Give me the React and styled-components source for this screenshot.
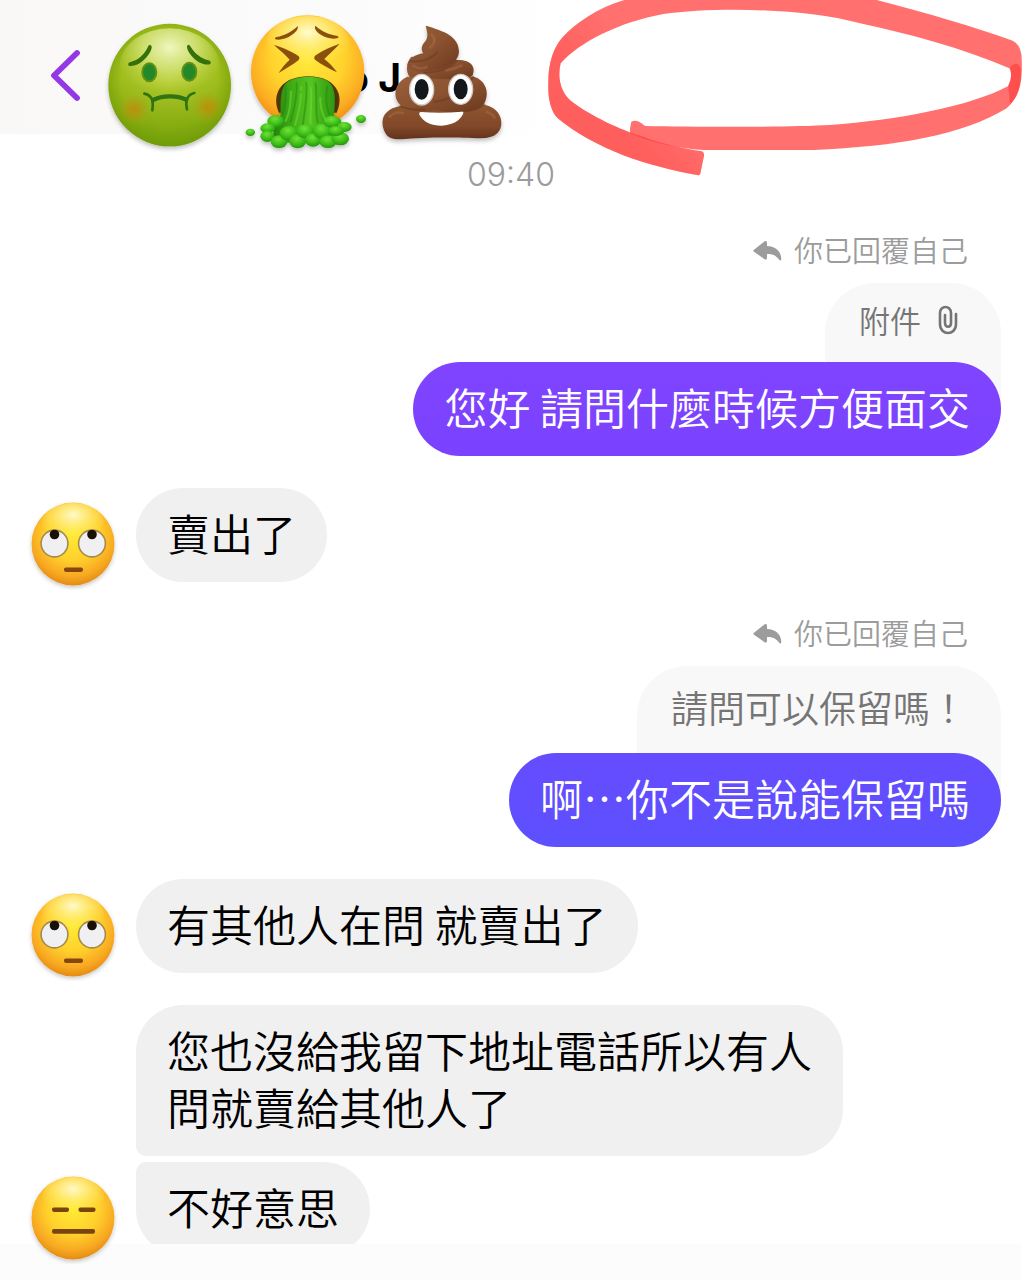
import React from 'react';
import styled, { createGlobalStyle, css } from 'styled-components';

const GlobalStyle = createGlobalStyle`
    * {
        box-sizing: border-box;
    }
    body {
        margin: 0;
        background-color: #fff;
        font-family: 'Noto Sans CJK TC', 'Noto Sans', sans-serif;
        font-weight: 350;
    }
`;

const Page = styled.div`
    position: relative;
    display: flex;
    flex-direction: column;
    min-height: 100vh;
    overflow: hidden;
`;

const Header = styled.header`
    position: relative;
    z-index: 1;
    display: flex;
    align-items: flex-start;
    height: 134px;
    padding-left: 40px;
    background: linear-gradient(to right, #faf8f7, #fafafa 24%, #fefefe 50%, #fff 55%);
`;

const BackButton = styled.button`
    width: 52px;
    height: 152px;
    margin-right: 12px;
    padding: 0;
    border: 0;
    background: none;
    cursor: pointer;
`;

const Name = styled.h1`
    position: absolute;
    left: 345px;
    top: 54px;
    margin: 0;
    font: 700 39px/48px Inter, sans-serif;
    color: #000;
`;

const Stickers = styled.div`
    position: relative;
    display: flex;
    gap: 4px;
`;

const Scribble = styled.svg`
    position: absolute;
    top: 0;
    right: 0;
    z-index: 2;
    pointer-events: none;
`;

const Chat = styled.main`
    display: flex;
    flex-direction: column;
    flex: 1;
    padding-top: 21px;
`;

const Time = styled.time`
    align-self: center;
    margin-bottom: 36px;
    font: 300 32px/40px Inter, sans-serif;
    color: #9b9b9b;
`;

const Thread = styled.div`
    display: flex;
    flex-direction: column;
    gap: 32px;
`;

const Sent = styled.div`
    display: flex;
    flex-direction: column;
    align-items: flex-end;
    padding: 0 21px;
`;

const ReplyLabel = styled.div`
    display: flex;
    align-items: center;
    gap: 12px;
    margin-bottom: 12px;
    padding-right: 33px;
    font-size: 29px;
    line-height: 36px;
    color: #9c9c9c;

    span {
        padding-bottom: 4px;
    }
`;

/* runs on underneath the bubble that answers it */
const Quote = styled.div`
    display: flex;
    align-items: center;
    gap: 16px;
    margin-bottom: -47px;
    padding: 16px 34px 68px;
    border-radius: 50px 50px 0 0;
    background-color: #f8f8f8;
    font-size: ${p => (p.$small ? '31px' : '37px')};
    line-height: ${p => (p.$small ? '42px' : '50px')};
    color: #757575;
`;

const Bubble = styled.p`
    margin: 0;
    padding: 16px 31px 21px;
    border-radius: 47px;
    font-size: 43px;
    line-height: 57px;
`;

const SentBubble = styled(Bubble)`
    position: relative;
    color: #fff;
    background: ${p => (p.$tone === 'violet'
        ? 'linear-gradient(#8044ff, #7a42ff)'
        : 'linear-gradient(#664cff, #5c50ff)')};
`;

const Received = styled.div`
    display: flex;
    align-items: flex-end;
    gap: 17px;
    padding: 0 21px 0 27px;
`;

const Stack = styled.div`
    display: flex;
    flex-direction: column;
    align-items: flex-start;
    gap: 6px;
`;

const ReceivedBubble = styled(Bubble)`
    max-width: 707px;
    color: #000;
    background-color: #f0f0f0;
    ${p => p.$join === 'below' && css`border-bottom-left-radius: 10px;`}
    ${p => p.$join === 'above' && css`border-top-left-radius: 10px;`}
`;

const Avatar = styled.svg`
    position: relative;
    z-index: 2;
    flex: none;
    margin-bottom: -8px;
`;

const Composer = styled.footer`
    position: relative;
    z-index: 1;
    height: 36px;
    margin-top: -12px;
    background-color: #fcfcfc;
`;

const NauseatedSticker = () => (
    <svg width="132" height="160" viewBox="312 0 396 480" role="img" aria-label="nauseated face">
        <defs>
            <radialGradient id="green" cx=".5" cy=".45" r=".56">
                <stop offset="0" stopColor="#b4cc30" />
                <stop offset=".7" stopColor="#9fbd1d" />
                <stop offset=".9" stopColor="#83a90d" />
                <stop offset="1" stopColor="#6d9508" />
            </radialGradient>
            <radialGradient id="greenShine" cx=".5" cy=".25" r=".6">
                <stop offset="0" stopColor="#f1f7c0" />
                <stop offset=".45" stopColor="#dbe888" stopOpacity=".75" />
                <stop offset="1" stopColor="#c5d94d" stopOpacity="0" />
            </radialGradient>
            <linearGradient id="greenShade" x1="0" y1="0" x2="0" y2="1">
                <stop offset=".45" stopColor="#7ba30a" stopOpacity="0" />
                <stop offset="1" stopColor="#6f9d08" stopOpacity=".8" />
            </linearGradient>
            <radialGradient id="cheek">
                <stop offset="0" stopColor="#c98505" stopOpacity=".8" />
                <stop offset="1" stopColor="#b99a10" stopOpacity="0" />
            </radialGradient>
            <filter id="stickerShadow" x="-10%" y="-10%" width="120%" height="125%">
                <feDropShadow dx="0" dy="8" stdDeviation="7" floodOpacity=".25" />
            </filter>
        </defs>
        <circle cx="509" cy="255" r="184" fill="url(#green)" filter="url(#stickerShadow)" />
        <circle cx="509" cy="255" r="184" fill="url(#greenShade)" />
        <ellipse cx="509" cy="200" rx="150" ry="115" fill="url(#greenShine)" />
        <circle cx="402" cy="328" r="48" fill="url(#cheek)" />
        <circle cx="624" cy="322" r="48" fill="url(#cheek)" />
        <g fill="#35700a">
            <path d="M450 134 C460 138 454 152 444 166 C428 188 406 200 388 198 C382 194 385 187 392 186 C415 180 432 164 442 144 Q446 134 450 134Z" />
            <path d="M564 134 C557 140 564 154 575 168 C592 188 612 196 630 193 C635 188 632 183 625 181 C602 174 584 160 574 143 Q569 133 564 134Z" />
        </g>
        <g fill="#23882a" stroke="#5f9012" strokeWidth="6">
            <ellipse cx="448" cy="217" rx="21" ry="27" />
            <ellipse cx="568" cy="215" rx="21" ry="27" />
        </g>
        <g fill="none" stroke="#2f7313" strokeLinecap="round">
            <path d="M433 281 C446 283 453 290 458 302 M560 300 C564 288 572 281 583 279" strokeWidth="8" />
            <path d="M459 300 C488 286 530 286 559 299" strokeWidth="13" />
            <path d="M457 300 Q460 315 457 331 M560 298 Q557 313 561 328" strokeWidth="8" />
        </g>
    </svg>
);

const VomitingSticker = () => (
    <svg width="132" height="160" viewBox="30 0 396 480" role="img" aria-label="vomiting face">
        <defs>
            <radialGradient id="yellow" cx=".5" cy=".38" r=".64">
                <stop offset="0" stopColor="#ffea3c" />
                <stop offset=".5" stopColor="#ffd32c" />
                <stop offset=".8" stopColor="#fcac22" />
                <stop offset="1" stopColor="#ec8810" />
            </radialGradient>
            <radialGradient id="yellowShine" cx=".5" cy=".3" r=".6">
                <stop offset="0" stopColor="#fffbd0" />
                <stop offset="1" stopColor="#ffee60" stopOpacity="0" />
            </radialGradient>
            <linearGradient id="stream">
                <stop offset="0" stopColor="#23820c" />
                <stop offset=".3" stopColor="#43ae18" />
                <stop offset=".55" stopColor="#55c522" />
                <stop offset="1" stopColor="#278e0c" />
            </linearGradient>
            <radialGradient id="blob" cx=".45" cy=".3" r=".7">
                <stop offset="0" stopColor="#6fe238" />
                <stop offset=".6" stopColor="#3ebd18" />
                <stop offset="1" stopColor="#23950c" />
            </radialGradient>
        </defs>
        <circle cx="233" cy="216" r="170" fill="url(#yellow)" filter="url(#stickerShadow)" />
        <ellipse cx="233" cy="130" rx="125" ry="82" fill="url(#yellowShine)" />
        <g fill="#8b510c">
            <path d="M203 78 C206 88 196 98 184 106 C168 117 150 121 136 118 Q132 113 140 111 C163 107 185 96 203 78Z" />
            <path d="M256 77 C251 87 262 98 275 106 C292 116 310 118 324 114 Q328 109 320 107 C298 104 275 94 256 77Z" />
            <path d="M132 135 C160 143 187 155 206 169 Q211 174 206 180 C188 194 168 206 146 219 C154 205 165 192 179 179 C166 164 148 150 132 135Z" />
            <path d="M329 131 C303 140 275 152 255 167 Q250 173 255 179 C274 193 296 205 321 217 C311 202 298 189 283 177 C296 162 315 148 329 131Z" />
        </g>
        <path d="M147 338 C128 298 142 254 184 238 C218 225 260 226 290 240 C329 260 338 300 320 338Z" fill="#55380a" />
        <g filter="url(#stickerShadow)">
            <path d="M152 345 C152 300 148 252 184 239 C218 227 256 227 287 240 C320 256 316 300 312 345 L330 385 L320 430 L130 428 L130 380Z" fill="url(#stream)" />
            <g fill="url(#blob)">
                <ellipse cx="137" cy="364" rx="25" ry="19" />
                <ellipse cx="113" cy="385" rx="22" ry="15" />
                <ellipse cx="112" cy="409" rx="21" ry="17" />
                <ellipse cx="147" cy="425" rx="25" ry="19" />
                <ellipse cx="176" cy="400" rx="27" ry="22" />
                <ellipse cx="203" cy="424" rx="25" ry="21" />
                <ellipse cx="226" cy="394" rx="27" ry="21" />
                <ellipse cx="249" cy="420" rx="24" ry="20" />
                <ellipse cx="276" cy="394" rx="27" ry="23" />
                <ellipse cx="294" cy="425" rx="26" ry="19" />
                <ellipse cx="331" cy="416" rx="26" ry="20" />
                <ellipse cx="307" cy="365" rx="27" ry="18" />
                <ellipse cx="343" cy="381" rx="22" ry="15" />
                <ellipse cx="318" cy="393" rx="24" ry="15" />
                <ellipse cx="61" cy="397" rx="14" ry="11" />
                <ellipse cx="393" cy="357" rx="15" ry="12" />
            </g>
        </g>
        <g fill="none" stroke="#6bd833" strokeWidth="6" strokeLinecap="round" opacity=".6">
            <path d="M183 275 C181 315 180 335 167 363" />
            <path d="M214 261 v8 M213 283 C212 320 203 346 195 375" />
            <path d="M242 263 C247 300 240 335 242 370" />
            <path d="M271 294 C270 325 278 345 289 363" />
        </g>
        <g fill="none" stroke="#218a0c" strokeWidth="6" strokeLinecap="round" opacity=".5">
            <path d="M166 258 C168 290 168 320 158 342 M200 250 C203 300 191 325 182 366" />
            <path d="M229 248 C233 300 222 340 219 372 M257 250 C262 300 255 330 263 368 M291 260 C287 290 290 325 298 344" />
        </g>
    </svg>
);

const PoopSticker = () => (
    <svg width="132" height="160" viewBox="438 0 396 480" role="img" aria-label="pile of poo">
        <defs>
            <linearGradient id="brown" x1="0" y1="0" x2="1" y2="1">
                <stop offset="0" stopColor="#9a603b" />
                <stop offset=".5" stopColor="#8a5230" />
                <stop offset="1" stopColor="#6a381e" />
            </linearGradient>
            <linearGradient id="brownBase" x1="0" y1="0" x2="0" y2="1">
                <stop offset="0" stopColor="#8d5530" />
                <stop offset=".6" stopColor="#82492a" />
                <stop offset="1" stopColor="#63321c" />
            </linearGradient>
        </defs>
        <g filter="url(#stickerShadow)">
            <path d="M510 318 C465 328 452 352 460 385 C468 412 482 419 515 418 C590 410 690 412 750 415 C795 416 816 395 814 366 C812 337 790 320 765 315Z" fill="url(#brownBase)" />
            <path d="M532 230 C500 244 490 275 500 300 C520 342 570 336 620 330 C680 345 745 335 764 308 C780 275 765 240 732 230Z" fill="url(#brown)" />
            <path d="M544 170 C528 190 527 215 540 232 C600 236 700 245 727 228 C739 202 725 180 684 180Z" fill="url(#brown)" />
            <path d="M588 77 C584 78 600 104 587 122 C572 138 573 150 580 160 C556 164 534 176 532 196 C540 216 583 218 617 211 C662 202 686 180 687 155 C686 108 643 94 588 77Z" fill="url(#brown)" />
        </g>
        <g fill="none" stroke="#6d3b20" strokeWidth="6" strokeLinecap="round" opacity=".6">
            <path d="M541 184 C568 187 602 181 622 156" />
            <path d="M583 218 C625 218 660 204 681 182" />
            <path d="M613 305 C662 299 710 273 729 231" />
            <path d="M511 319 C540 331 563 331 583 328 M707 334 C735 331 754 322 763 313" />
        </g>
        <g fill="none" stroke="#b67a52" strokeWidth="8" strokeLinecap="round" opacity=".35">
            <path d="M605 104 C619 118 614 132 600 143" />
            <path d="M551 198 C562 206 578 206 590 201 M649 211 C668 209 681 204 694 197" />
            <path d="M480 350 C488 340 502 335 519 339 M770 336 C782 339 789 345 794 353" />
        </g>
        <g fill="#fff" stroke="#d5c8c2" strokeWidth="4">
            <ellipse cx="575" cy="269" rx="36" ry="46" />
            <ellipse cx="692" cy="268" rx="36" ry="45" />
        </g>
        <g fill="#15181b">
            <ellipse cx="575" cy="268" rx="21" ry="31" />
            <ellipse cx="692" cy="267" rx="21" ry="31" />
        </g>
        <path d="M572 336 Q566 337 568 344 C580 366 604 377 635 377 C666 376 691 363 700 340 Q701 334 695 335 C655 339 612 339 572 336Z" fill="#fff" />
    </svg>
);

const FaceAvatar = ({ mood }) => (
    <Avatar width="92" height="92" viewBox="0 0 92 92" role="img" aria-label={mood}>
        <defs>
            <radialGradient id="face" cx=".5" cy=".38" r=".64">
                <stop offset="0" stopColor="#ffec34" />
                <stop offset=".5" stopColor="#ffd02c" />
                <stop offset=".8" stopColor="#f8a822" />
                <stop offset="1" stopColor="#e08611" />
            </radialGradient>
            <radialGradient id="faceShine" cx=".5" cy=".3" r=".6">
                <stop offset="0" stopColor="#fff9cd" />
                <stop offset="1" stopColor="#ffee60" stopOpacity="0" />
            </radialGradient>
            <filter id="faceShadow" x="-10%" y="-10%" width="120%" height="125%">
                <feDropShadow dx="0" dy="2" stdDeviation="2" floodOpacity=".22" />
            </filter>
        </defs>
        <circle cx="46" cy="46" r="41.5" fill="url(#face)" filter="url(#faceShadow)" />
        <ellipse cx="46" cy="25" rx="31" ry="20" fill="url(#faceShine)" />
        {mood === 'rolling eyes' ? (
            <g>
                <g fill="#f0f0f3" stroke="#a58b4b" strokeWidth="1.6">
                    <circle cx="27.5" cy="45.5" r="13.4" />
                    <circle cx="65" cy="45.5" r="13.4" />
                </g>
                <circle cx="27.5" cy="36.5" r="4.8" fill="#1a1008" />
                <circle cx="65" cy="36.5" r="4.8" fill="#1a1008" />
                <rect x="37" y="69.5" width="19" height="4.4" rx="1.8" fill="#854710" />
            </g>
        ) : (
            <g fill="#784510">
                <rect x="25" y="35.5" width="17" height="4.4" rx="1.8" />
                <rect x="51.5" y="35.5" width="17" height="4.4" rx="1.8" />
                <rect x="25" y="57" width="43" height="4.8" rx="2" />
            </g>
        )}
    </Avatar>
);

const ReplyIcon = () => (
    <svg width="29" height="22" viewBox="0 0 87 66" fill="#9c9c9c" aria-hidden="true">
        <path d="M3 29 L35 4 Q42 0 42 8 V18 C67 19 83 32 85 56 Q85 64 79 60 C70 47 60 42 42 42 V54 Q41 62 35 58 L3 35 Q-1 32 3 29Z" />
    </svg>
);

const ClipIcon = () => (
    <svg width="30" height="32" viewBox="0 0 30 32" fill="none" stroke="#757575" strokeWidth="2.6" strokeLinecap="round" aria-hidden="true">
        <path d="M19 10 V20 C19 32 3 32 3 20 V9 C3 1 14 1 14 9 V19 C14 24 8 24 8 19 V11" />
    </svg>
);

const Reply = ({ quote, attachment, tone, children }) => (
    <Sent>
        <ReplyLabel>
            <ReplyIcon />
            <span>你已回覆自己</span>
        </ReplyLabel>
        <Quote $small={attachment}>
            <span>{quote}</span>
            {attachment && <ClipIcon />}
        </Quote>
        <SentBubble $tone={tone}>{children}</SentBubble>
    </Sent>
);

const App = () => {
    return (
        <Page lang="zh-TW">
            <GlobalStyle />
            <Header>
                <BackButton aria-label="返回">
                    <svg width="52" height="60" viewBox="0 0 52 60" fill="none" stroke="#9438e6" strokeWidth="5.8" strokeLinecap="round" strokeLinejoin="round">
                        <path d="M37 8 L14 30.5 L37 53" />
                    </svg>
                </BackButton>
                <Name>o J</Name>
                <Stickers>
                    <NauseatedSticker />
                    <VomitingSticker />
                    <PoopSticker />
                </Stickers>
            </Header>
            <Scribble width="492" height="200" viewBox="0 0 1476 600" fill="#ff4542" aria-hidden="true">
                <defs>
                    <linearGradient id="ink" gradientUnits="userSpaceOnUse" x1="230" y1="60" x2="90" y2="190">
                        <stop offset="0" stopColor="#ff4542" stopOpacity="0" />
                        <stop offset="1" stopColor="#ff4542" stopOpacity=".4" />
                    </linearGradient>
                </defs>
                <path opacity=".77" d="M505 526 C350 498 200 450 83 355 C60 330 53 290 55 245 C55 190 70 145 95 115 C145 60 210 20 300 -5 H1020 C1180 35 1330 80 1448 122 Q1474 135 1475 175 C1477 230 1475 280 1440 312 L1435 256 Q1450 225 1438 205 C1300 145 1130 100 990 70 C830 25 560 20 400 42 C270 66 150 125 92 190 C82 230 90 280 130 308 C180 345 270 390 340 410 C390 430 460 445 516 454 Q524 458 522 468 L512 516 Q511 526 505 526Z" />
                <path opacity=".77" d="M300 386 L304 365 Q320 355 345 378 C500 381 780 382 900 375 C1100 360 1320 320 1435 258 Q1450 230 1440 203 Q1462 178 1472 205 C1476 250 1462 300 1430 325 C1300 405 1100 440 850 450 H520 L490 448 C420 440 350 424 300 400Z" />
                <path fill="url(#ink)" d="M505 526 C350 498 200 450 83 355 C60 330 53 290 55 245 C55 190 70 145 95 115 C145 60 210 20 300 -5 L330 60 C230 85 150 125 92 190 C82 230 90 280 130 308 C180 345 270 390 340 410 C390 430 460 445 516 454 Q524 458 522 468 L512 516 Q511 526 505 526Z" />
            </Scribble>
            <Chat>
                <Time>09:40</Time>
                <Thread>
                    <Reply quote="附件" attachment tone="violet">您好 請問什麼時候方便面交</Reply>
                    <Received>
                        <FaceAvatar mood="rolling eyes" />
                        <ReceivedBubble>賣出了</ReceivedBubble>
                    </Received>
                    <Reply quote="請問可以保留嗎！" tone="indigo">啊…你不是說能保留嗎</Reply>
                    <Received>
                        <FaceAvatar mood="rolling eyes" />
                        <ReceivedBubble>有其他人在問 就賣出了</ReceivedBubble>
                    </Received>
                    <Received>
                        <FaceAvatar mood="expressionless" />
                        <Stack>
                            <ReceivedBubble $join="below">您也沒給我留下地址電話所以有人問就賣給其他人了</ReceivedBubble>
                            <ReceivedBubble $join="above">不好意思</ReceivedBubble>
                        </Stack>
                    </Received>
                </Thread>
            </Chat>
            <Composer />
        </Page>
    );
};

export default App;
